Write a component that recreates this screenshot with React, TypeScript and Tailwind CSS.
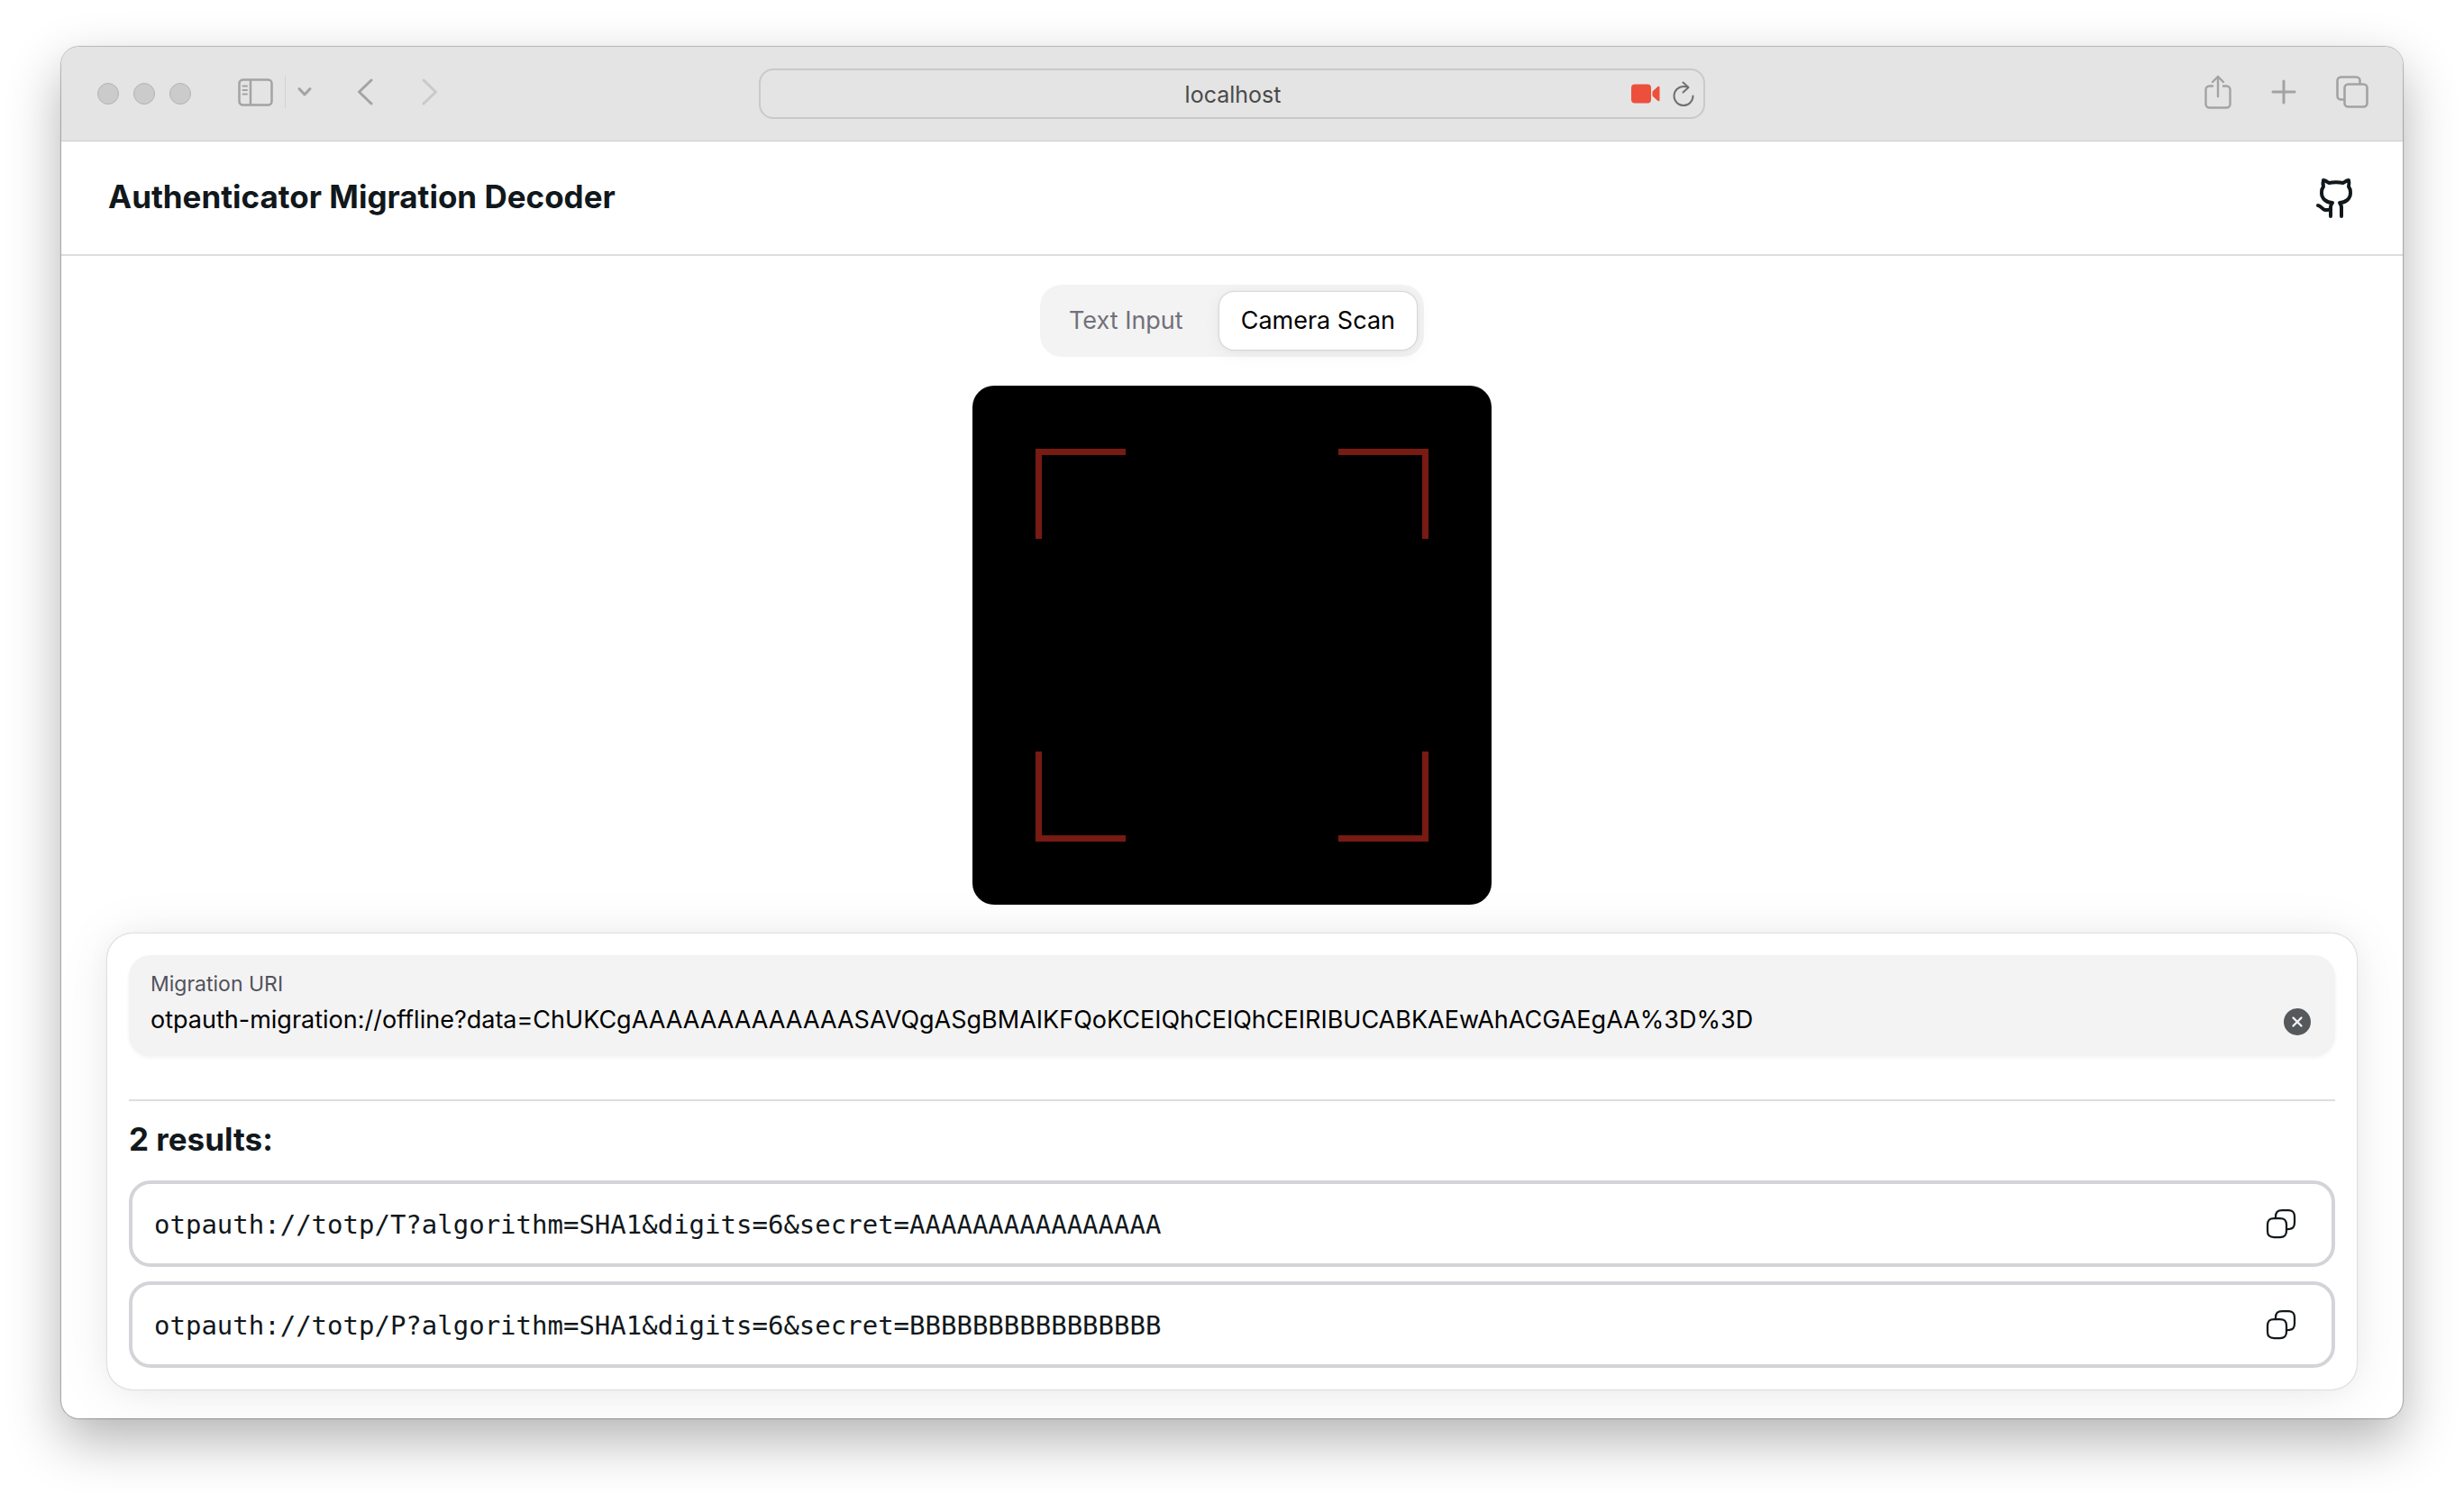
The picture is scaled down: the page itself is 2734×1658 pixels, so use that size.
import { useState } from "react";

const MIGRATION_URI =
  "otpauth-migration://offline?data=" +
  "ChUKCgAAAAAAAAAAAAASAVQg" +
  "ASgBMAIKFQoKCEIQhCEIQhCE" +
  "IRIBUCABKAEwAhACGAEgAA%3D%3D";

const RESULTS = [
  "otpauth://totp/T?algorithm=SHA1&digits=6&secret=AAAAAAAAAAAAAAAA",
  "otpauth://totp/P?algorithm=SHA1&digits=6&secret=BBBBBBBBBBBBBBBB",
];

function SidebarIcon() {
  return (
    <svg width="40" height="32" viewBox="0 0 40 32" fill="none" stroke="currentColor" strokeWidth="2.5">
      <rect x="1.5" y="1.5" width="36" height="28" rx="4" />
      <path d="M14 1.5v28" />
      <path d="M5.5 8.5h4.5M5.5 13h4.5M5.5 17.5h4.5" strokeWidth="2" strokeLinecap="round" />
    </svg>
  );
}

function ShareIcon() {
  return (
    <svg width="30" height="38" viewBox="0 0 30 38" fill="none" stroke="currentColor" strokeWidth="2.4" strokeLinecap="round" strokeLinejoin="round">
      <path d="M10 12.5H5.5a4 4 0 0 0-4 4V32.5a4 4 0 0 0 4 4h19a4 4 0 0 0 4-4V16.5a4 4 0 0 0-4-4h-4.5" strokeLinecap="butt" />
      <path d="M15 24V2M9 8l6-6 6 6" />
    </svg>
  );
}

function TabsIcon() {
  return (
    <svg width="36" height="36" viewBox="0 0 36 36" fill="none" stroke="currentColor" strokeWidth="2.6">
      <path d="M9.5 26.500H5.5a4 4 0 0 1-4-4V5.5a4 4 0 0 1 4-4H22.500a4 4 0 0 1 4 4V9.5" />
      <rect x="9.5" y="9.5" width="25" height="25" rx="4" />
    </svg>
  );
}

function BrowserBar() {
  return (
    <div className="grid h-[105px] grid-cols-[1fr_auto_1fr] items-center border-b border-[#cfcfcf] bg-[#e4e4e4] pb-1 text-[#a3a3a3]">
      <div className="flex items-center pl-10">
        <div className="flex gap-4 pt-1">
          <span className="size-6 rounded-full border border-[#b3b3b3] bg-[#cbcbcb]" />
          <span className="size-6 rounded-full border border-[#b3b3b3] bg-[#cbcbcb]" />
          <span className="size-6 rounded-full border border-[#b3b3b3] bg-[#cbcbcb]" />
        </div>
        <button type="button" aria-label="Show sidebar" className="ml-[52px] pt-px">
          <SidebarIcon />
        </button>
        <span className="ml-3 h-9 w-px bg-[#d3d3d3]" />
        <button type="button" aria-label="Tab groups" className="ml-3">
          <svg width="18" height="12" viewBox="0 0 18 12" fill="none" stroke="currentColor" strokeWidth="3" strokeLinecap="round" strokeLinejoin="round">
            <path d="M3 2.500l6 6.500 6-6.500" />
          </svg>
        </button>
        <button type="button" aria-label="Back" className="ml-[49px]">
          <svg width="18" height="30" viewBox="0 0 18 30" fill="none" stroke="currentColor" strokeWidth="3" strokeLinecap="round" strokeLinejoin="round">
            <path d="M16 2L2.500 15 16 28" />
          </svg>
        </button>
        <button type="button" aria-label="Forward" className="ml-[54px] text-[#c9c9c9]">
          <svg width="18" height="30" viewBox="0 0 18 30" fill="none" stroke="currentColor" strokeWidth="3" strokeLinecap="round" strokeLinejoin="round">
            <path d="M2 2l13.500 13L2 28" />
          </svg>
        </button>
      </div>

      <div className="mt-1 grid h-14 w-[1050px] grid-cols-[1fr_auto_1fr] items-center rounded-2xl border-2 border-[#c9c9c9] pr-2.5 pl-3">
        <span className="col-start-2 pt-0.5 text-[25px] leading-8 text-[#4a4a4a]">localhost</span>
        <div className="flex items-center justify-end gap-3.5">
          <svg width="32" height="22" viewBox="0 0 32 22" fill="#ed4f3d" aria-label="Camera in use">
            <rect x="0" y="0.5" width="22" height="21" rx="4" />
            <path d="M23.500 8.500l5.800-5.200c1-.9 2.200-.5 2.200.8v13.800c0 1.300-1.200 1.700-2.200.8l-5.800-5.200z" />
          </svg>
          <button type="button" aria-label="Reload" className="text-[#707070]">
            <svg width="24" height="28" viewBox="0 0 24 28" fill="none" stroke="currentColor" strokeWidth="2" strokeLinecap="round" strokeLinejoin="round">
              <path d="M22.500 16.500a10.500 10.500 0 1 1-10.500-10.500c1.800 0 3.400.3 5 .8" />
              <path d="M11.500 1.500l6 5.400-6 5.600" />
            </svg>
          </button>
        </div>
      </div>

      <div className="flex items-center justify-end gap-11 pr-[38px]">
        <button type="button" aria-label="Share">
          <ShareIcon />
        </button>
        <button type="button" aria-label="New tab">
          <svg width="28" height="28" viewBox="0 0 28 28" fill="none" stroke="currentColor" strokeWidth="3" strokeLinecap="round">
            <path d="M14 2v24M2 14h24" />
          </svg>
        </button>
        <button type="button" aria-label="Tab overview">
          <TabsIcon />
        </button>
      </div>
    </div>
  );
}

function GithubIcon() {
  return (
    <svg width="48" height="48" viewBox="0 0 24 24" fill="none" stroke="currentColor" strokeWidth="2" strokeLinecap="round" strokeLinejoin="round">
      <path d="M15 22v-4a4.800 4.800 0 0 0-1-3.500c3 0 6-2 6-5.500.08-1.250-.27-2.480-1-3.500.28-1.150.28-2.350 0-3.500 0 0-1 0-3 1.500-2.640-.5-5.360-.5-8 0C6 2 5 2 5 2c-.3 1.150-.3 2.350 0 3.500A5.403 5.403 0 0 0 4 9c0 3.500 3 5.500 6 5.500-.39.490-.68 1.050-.85 1.650-.17.600-.22 1.230-.15 1.850v4" />
      <path d="M9 18c-4.510 2-5-2-7-2" />
    </svg>
  );
}

function CopyIcon() {
  return (
    <svg width="36" height="36" viewBox="0 0 24 24" fill="none" stroke="currentColor" strokeWidth="1.500" strokeLinecap="round" strokeLinejoin="round">
      <path d="M16 17.100c0 3.500-1.400 4.900-4.900 4.900H6.900C3.400 22 2 20.600 2 17.100v-4.200C2 9.400 3.400 8 6.900 8h4.200c3.500 0 4.900 1.400 4.900 4.900z" />
      <path d="M8 8V6.900C8 3.400 9.400 2 12.900 2h4.200C20.600 2 22 3.400 22 6.900v4.200c0 3.500-1.400 4.900-4.900 4.900H16" />
    </svg>
  );
}

function Snippet({ value }: { value: string }) {
  return (
    <li className="flex h-24 items-center justify-between rounded-3xl border-4 border-[#d4d4d8] pr-[38px] pl-6 text-[#11181c]">
      <code className="pt-0.5 font-['DejaVu_Sans_Mono',monospace] text-[29px] leading-10">{value}</code>
      <button type="button" aria-label={"Copy " + value} onClick={() => navigator.clipboard?.writeText(value)}>
        <CopyIcon />
      </button>
    </li>
  );
}

const TAB = "h-16 rounded-2xl px-6 text-[27px] leading-10";

export default function App() {
  const [tab, setTab] = useState("camera");
  const [uri, setUri] = useState(MIGRATION_URI);
  const on = " bg-white text-black shadow-[0_0_10px_rgba(0,0,0,0.02),0_4px_20px_rgba(0,0,0,0.06),0_0_2px_rgba(0,0,0,0.3)]";
  const off = " text-[#71717a]";

  return (
    <div className="min-h-screen bg-white px-[68px] pt-[52px] pb-[84px] font-['Inter','Liberation_Sans',sans-serif]">
      <div className="overflow-hidden rounded-[20px] bg-white shadow-[0_0_1px_1px_rgba(0,0,0,0.25),0_24px_60px_rgba(0,0,0,0.3)]">
        <BrowserBar />
        <header className="flex h-[127px] items-center justify-between border-b-2 border-[#dddddf] pr-[50px] pl-[52px] text-[#11181c]">
          <h1 className="pb-1 text-[35px] leading-[48px] font-bold">Authenticator Migration Decoder</h1>
          <a href="https://github.com" aria-label="GitHub repository">
            <GithubIcon />
          </a>
        </header>

        <main className="flex flex-col gap-8 px-[51px] py-8">
          <div role="tablist" className="flex gap-4 self-center rounded-3xl bg-[#f3f3f3] p-2">
            <button type="button" role="tab" aria-selected={tab === "text"} onClick={() => setTab("text")} className={TAB + (tab === "text" ? on : off)}>
              Text Input
            </button>
            <button type="button" role="tab" aria-selected={tab === "camera"} onClick={() => setTab("camera")} className={TAB + (tab === "camera" ? on : off)}>
              Camera Scan
            </button>
          </div>

          <div className="z-10 size-[576px] self-center rounded-3xl bg-black p-[70px]">
            <svg viewBox="0 0 436 436" fill="none" stroke="#771b13" strokeWidth="7" className="size-full">
              <path d="M3.500 100V3.500H100M336 3.500h96.500V100M432.500 336v96.500H336M100 432.500H3.500V336" />
            </svg>
          </div>

          <section className="rounded-[28px] bg-white p-6 shadow-[0_0_30px_rgba(0,0,0,0.03),0_4px_60px_rgba(0,0,0,0.08),0_0_2px_rgba(0,0,0,0.3)]">
            <div className="flex h-28 items-center justify-between rounded-3xl bg-[#f3f3f3] pr-[27px] pl-6 shadow-[0_2px_4px_rgba(0,0,0,0.05)]">
              <div className="flex grow flex-col gap-1 pb-1">
                <label htmlFor="uri" className="text-[23px] leading-8 text-[#52525b]">
                  Migration URI
                </label>
                <input id="uri" type="text" value={uri} onChange={(e) => setUri(e.target.value)} className="w-full bg-transparent text-[27px] leading-10 text-black outline-none" />
              </div>
              <button type="button" aria-label="Clear" onClick={() => setUri("")} className="mt-9">
                <svg width="30" height="30" viewBox="0 0 30 30" fill="none">
                  <circle cx="15" cy="15" r="15" fill="#55595c" />
                  <path d="M10.500 10.500l9 9M19.500 10.500l-9 9" stroke="#f4f4f5" strokeWidth="2.400" strokeLinecap="round" />
                </svg>
              </button>
            </div>
            <hr className="mt-12 border-t-2 border-[#dddddf]" />
            <h2 className="mt-[18px] text-[35px] leading-[48px] font-bold text-[#11181c]">2 results:</h2>
            <ul className="mt-[22px] flex flex-col gap-4">
              {RESULTS.map((value) => (
                <Snippet key={value} value={value} />
              ))}
            </ul>
          </section>
        </main>
      </div>
    </div>
  );
}
